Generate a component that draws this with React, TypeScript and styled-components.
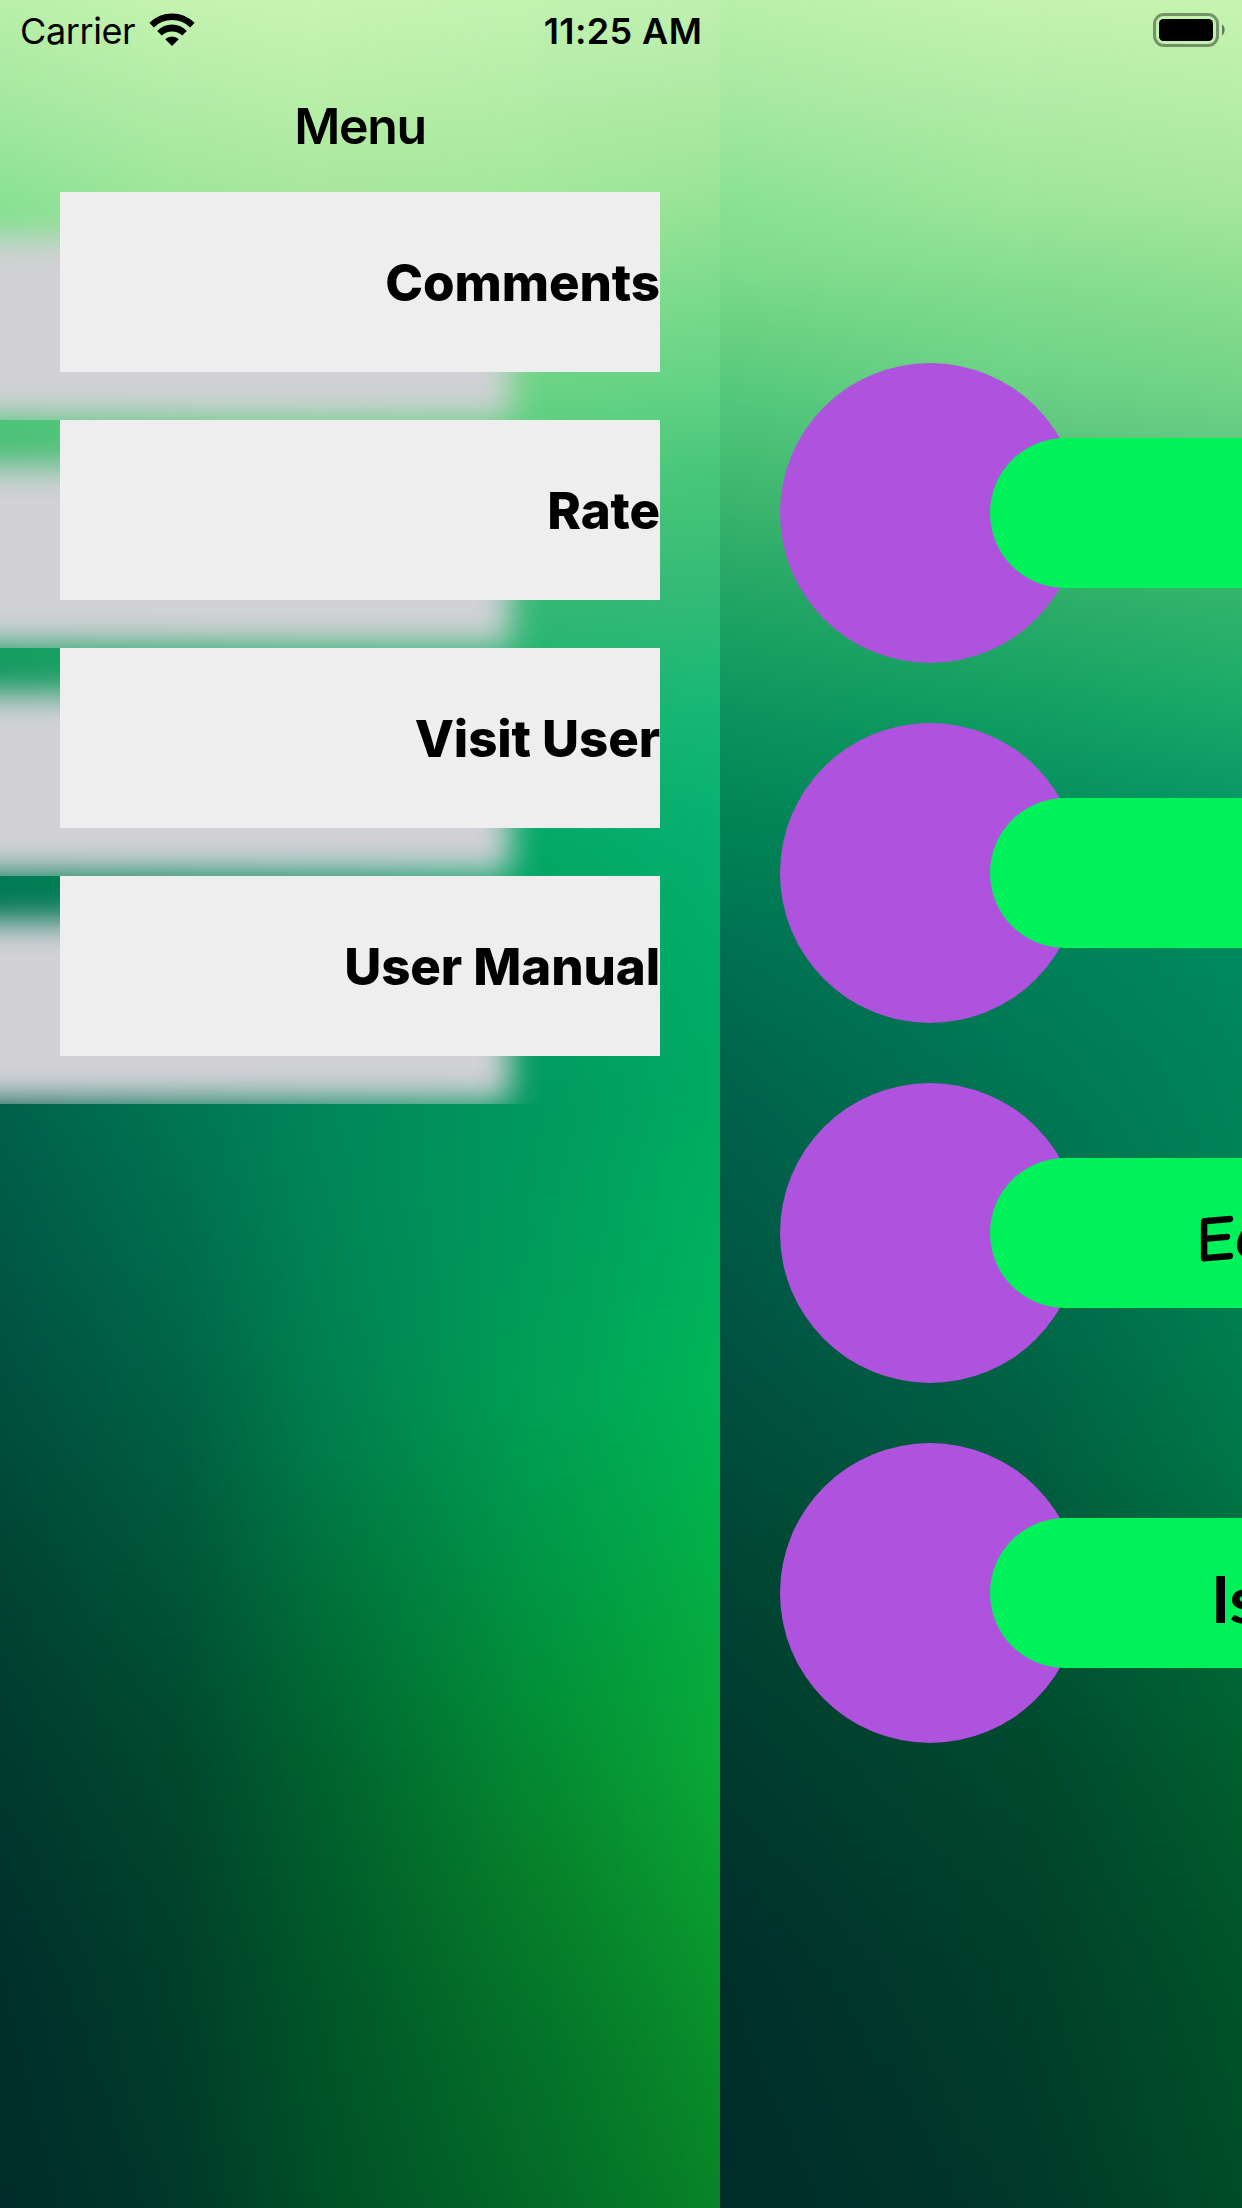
import React from "react";
import styled, { createGlobalStyle } from "styled-components";

const GlobalStyle = createGlobalStyle`
  *, *::before, *::after { box-sizing: border-box; }
  html, body { margin: 0; padding: 0; }
  body { font-family: Inter, Roboto, "Liberation Sans", sans-serif; color: #000; }
`;

const Screen = styled.div`
  position: relative;
  width: 1242px;
  height: 2208px;
  overflow: hidden;
  display: flex;
`;

/* The wallpaper is a set of vertical ramps blended from left to right. */
type Stop = [string, number];
type Ramp = { at: number; stops: Stop[] };

const ramps: Ramp[] = [
  { at: 0, stops: [["#b9f0aa", 0], ["#a6e9a0", 100], ["#8ae294", 200], ["#7fdc8d", 265], ["#66cf80", 340], ["#4fc67a", 410], ["#3cb56e", 500], ["#27a866", 575], ["#17a062", 640], ["#0a905c", 730], ["#008054", 850], ["#007353", 930], ["#00674c", 1040], ["#00604a", 1120], ["#005845", 1250], ["#00503f", 1380], ["#004533", 1560], ["#003d2f", 1700], ["#00362d", 1840], ["#00302c", 1980], ["#002c2a", 2208]] },
  { at: 25, stops: [["#c5f3b0", 0], ["#b2eca6", 100], ["#9fe69a", 200], ["#82dc8e", 290], ["#6fd488", 370], ["#5cc67e", 440], ["#32b06a", 580], ["#14a063", 700], ["#06905e", 800], ["#008259", 920], ["#007a56", 1040], ["#007551", 1120], ["#006c4c", 1260], ["#006244", 1400], ["#005437", 1600], ["#00492e", 1760], ["#00402a", 1960], ["#00392a", 2208]] },
  { at: 45, stops: [["#c8f4b2", 0], ["#b8eea8", 100], ["#a8e79c", 200], ["#8add8e", 300], ["#70d286", 400], ["#58c680", 470], ["#32b56c", 600], ["#1cac6a", 700], ["#0d9a68", 790], ["#008c60", 920], ["#00875c", 1060], ["#008659", 1160], ["#008253", 1320], ["#007c4a", 1450], ["#00703a", 1600], ["#00622e", 1780], ["#005628", 2000], ["#005027", 2208]] },
  { at: 75, stops: [["#c2f3b0", 0], ["#b2eca6", 100], ["#a2e89a", 200], ["#7fdc8c", 310], ["#66d284", 400], ["#4ec87c", 480], ["#35b874", 600], ["#14b070", 740], ["#04a866", 850], ["#02a064", 1000], ["#009a5e", 1110], ["#009c5c", 1240], ["#00a055", 1400], ["#009848", 1550], ["#029038", 1700], ["#07802a", 1880], ["#04722a", 2060], ["#046a28", 2208]] },
  { at: 100, stops: [["#bfefb0", 0], ["#aee9a2", 100], ["#9be496", 190], ["#82dc90", 270], ["#62d284", 390], ["#48c67a", 470], ["#34bb76", 590], ["#18b876", 700], ["#08b070", 820], ["#02ac68", 960], ["#00aa62", 1090], ["#00b060", 1220], ["#00b658", 1380], ["#02b24c", 1510], ["#06ac40", 1640], ["#0aa838", 1770], ["#0a9a30", 1920], ["#0a8c2a", 2080], ["#088428", 2208]] },
];

const rampCss = (stops: Stop[]) =>
  `linear-gradient(180deg, ${stops.map(([c, y]) => `${c} ${y}px`).join(", ")})`;

const Wallpaper = styled.div`
  position: absolute;
  inset: 0;
`;

const WallpaperRamp = styled.div<{ $ramp: Ramp; $from: number | null }>`
  position: absolute;
  inset: 0;
  background: ${(p) => rampCss(p.$ramp.stops)};
  ${(p) =>
    p.$from !== null &&
    `mask-image: linear-gradient(90deg, transparent ${p.$from}%, #000 ${p.$ramp.at}%);`}
`;

const Panel = styled.section<{ $width: number }>`
  position: relative;
  flex: none;
  width: ${(p) => p.$width}px;
  height: 2208px;
  overflow: hidden;
`;

const PanelBody = styled.div<{ $top: number }>`
  position: relative;
  display: flex;
  flex-direction: column;
  padding-top: ${(p) => p.$top}px;
`;

const StatusBar = styled.header`
  position: absolute;
  top: 0;
  left: 0;
  width: 1242px;
  height: 60px;
  display: grid;
  grid-template-columns: 1fr auto 1fr;
  align-items: center;
  padding: 0 16px 0 20px;
  z-index: 2;
`;

const CarrierGroup = styled.div`
  display: flex;
  align-items: center;
  gap: 14px;
`;

const StatusText = styled.span<{ $weight: number; $spacing: number }>`
  font-size: 36px;
  line-height: 58px;
  padding-top: 2px;
  font-weight: ${(p) => p.$weight};
  letter-spacing: ${(p) => p.$spacing}px;
  white-space: pre;
`;

const BatterySlot = styled.div`
  justify-self: end;
  display: flex;
`;

const MenuTitle = styled.h1`
  margin: 0;
  height: 123px;
  padding-top: 20px;
  text-align: center;
  font-size: 50px;
  line-height: 74px;
  font-weight: 600;
  letter-spacing: -1.4px;
`;

const MenuRow = styled.div`
  height: 228px;
  padding: 0 60px 48px;
  overflow: hidden;
`;

const MenuCard = styled.button`
  display: flex;
  align-items: center;
  justify-content: flex-end;
  width: 600px;
  height: 180px;
  padding: 1px 0 0;
  border: 0;
  background: #eeeeee;
  box-shadow: -150px 45px 30px #d1d1d6;
  color: #000;
  font-family: inherit;
  font-size: 51px;
  line-height: 60px;
  font-weight: 800;
  letter-spacing: -0.1px;
  white-space: nowrap;
`;

const OptionList = styled.div`
  display: flex;
  flex-direction: column;
  gap: 60px;
  padding-left: 60px;
`;

const OptionRow = styled.div`
  display: flex;
  align-items: center;
`;

const Disc = styled.div`
  flex: none;
  width: 300px;
  height: 300px;
  border-radius: 50%;
  background: #af52de;
`;

const Pill = styled.div`
  flex: none;
  width: 780px;
  height: 150px;
  margin-left: -90px;
  border-radius: 75px;
  background: #00f25a;
`;

const PillLabel = styled.span<{ $inset: number; $family: string; $slope: number }>`
  display: block;
  width: max-content;
  margin-left: ${(p) => p.$inset}px;
  padding-top: 5px;
  font-family: ${(p) => p.$family}, sans-serif;
  font-weight: 700;
  font-size: 65px;
  line-height: 150px;
  white-space: nowrap;
  transform: skewY(${(p) => p.$slope}deg);
`;

const WifiIcon = () => (
  <svg width="46" height="34" viewBox="0 0 46 34">
    <path d="M0.4 9.8 Q10 0.4 23 0.4 Q36 0.4 45.6 9.8 L41.2 14.4 Q33.4 7 23 7 Q12.6 7 4.8 14.4 Z" />
    <path d="M8.2 18 Q14.6 11.6 23 11.6 Q31.4 11.6 37.8 18 L33.2 22.6 Q29 18.4 23 18.4 Q17 18.4 12.8 22.6 Z" />
    <path d="M16.2 26.2 Q19 23.4 23 23.4 Q27 23.4 29.8 26.2 L23 33 Z" />
  </svg>
);

const BatteryIcon = () => (
  <svg width="73" height="34" viewBox="0 0 73 34">
    <rect x="1.5" y="1.5" width="63" height="31" rx="9.5" fill="none" stroke="#000" strokeOpacity="0.4" strokeWidth="3" />
    <rect x="6" y="6" width="54" height="22" rx="4.5" />
    <path d="M69 11 A8 8 0 0 1 69 23 Z" fillOpacity="0.5" />
  </svg>
);

const Backdrop = () => (
  <Wallpaper>
    {ramps.map((ramp, i) => (
      <WallpaperRamp key={ramp.at} $ramp={ramp} $from={i === 0 ? null : ramps[i - 1].at} />
    ))}
  </Wallpaper>
);

const menuItems = ["Comments", "Rate", "Visit User", "User Manual"];
const options = [
  { id: 1 },
  { id: 2 },
  { id: 3, label: "Ea", inset: 206, family: '"Comic Neue", Lato', slope: -5 },
  { id: 4, label: "Is", inset: 221, family: "Lato", slope: 0 },
];

export default function App() {
  return (
    <Screen>
      <GlobalStyle />
      <StatusBar>
        <CarrierGroup>
          <StatusText $weight={400} $spacing={-0.4}>Carrier</StatusText>
          <WifiIcon />
        </CarrierGroup>
        <StatusText $weight={600} $spacing={0.4}>11:25 AM</StatusText>
        <BatterySlot>
          <BatteryIcon />
        </BatterySlot>
      </StatusBar>
      <Panel $width={720}>
        <Backdrop />
        <PanelBody $top={69}>
          <MenuTitle>Menu</MenuTitle>
          {menuItems.map((item) => (
            <MenuRow key={item}>
              <MenuCard>{item}</MenuCard>
            </MenuRow>
          ))}
        </PanelBody>
      </Panel>
      <Panel $width={1242}>
        <Backdrop />
        <PanelBody $top={363}>
          <OptionList>
            {options.map((option) => (
              <OptionRow key={option.id}>
                <Disc />
                <Pill>
                  {option.label && (
                    <PillLabel $inset={option.inset} $family={option.family} $slope={option.slope}>
                      {option.label}
                    </PillLabel>
                  )}
                </Pill>
              </OptionRow>
            ))}
          </OptionList>
        </PanelBody>
      </Panel>
    </Screen>
  );
}
